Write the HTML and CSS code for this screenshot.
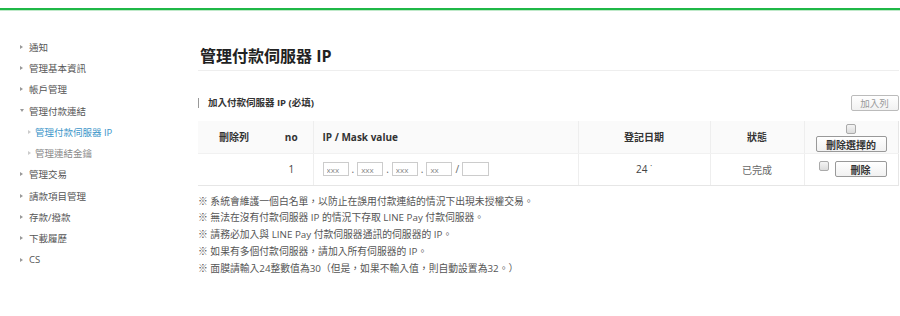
FILE: index.html
```html
<!DOCTYPE html>
<html lang="zh-Hant">

<head>
    <meta charset="UTF-8">
    <meta name="viewport" content="width=device-width, initial-scale=1.0">
    <title>管理付款伺服器 IP</title>
    <link rel="stylesheet" href="styles.css">
</head>

<body>
    <div class="topbar"></div>
    <div class="layout">
        <ul class="menu">
            <li><i class="arrow"></i>通知</li>
            <li><i class="arrow"></i>管理基本資訊</li>
            <li><i class="arrow"></i>帳戶管理</li>
            <li class="open"><i class="arrow"></i>管理付款連結</li>
            <li class="sub current"><i class="arrow"></i>管理付款伺服器 IP</li>
            <li class="sub"><i class="arrow"></i>管理連結金鑰</li>
            <li><i class="arrow"></i>管理交易</li>
            <li><i class="arrow"></i>請款項目管理</li>
            <li><i class="arrow"></i>存款/撥款</li>
            <li><i class="arrow"></i>下載履歷</li>
            <li><i class="arrow"></i>CS</li>
        </ul>

        <div class="main">
            <h1 class="title">管理付款伺服器 IP</h1>

            <div class="section-head">
                <h2>加入付款伺服器 IP (必填)</h2>
                <button class="btn btn-add">加入列</button>
            </div>

            <table class="ip-table">
                <colgroup>
                    <col style="width:72px">
                    <col style="width:43px">
                    <col style="width:265px">
                    <col style="width:132px">
                    <col style="width:94px">
                    <col style="width:94px">
                </colgroup>
                <thead>
                    <tr>
                        <th>刪除列</th>
                        <th class="no-line">no</th>
                        <th class="left">IP / Mask value</th>
                        <th>登記日期</th>
                        <th>狀態</th>
                        <th>
                            <div class="del-all">
                                <input type="checkbox" class="chk">
                                <button class="btn btn-del">刪除選擇的</button>
                            </div>
                        </th>
                    </tr>
                </thead>
                <tbody>
                    <tr>
                        <td></td>
                        <td class="no-line">1</td>
                        <td class="left">
                            <div class="ip">
                                <input type="text" class="oct" placeholder="xxx">
                                <span>.</span>
                                <input type="text" class="oct" placeholder="xxx">
                                <span>.</span>
                                <input type="text" class="oct" placeholder="xxx">
                                <span>.</span>
                                <input type="text" class="oct" placeholder="xx">
                                <span>/</span>
                                <input type="text" class="oct mask">
                            </div>
                        </td>
                        <td>24 ˙</td>
                        <td class="muted">已完成</td>
                        <td>
                            <div class="row-del">
                                <input type="checkbox" class="chk">
                                <button class="btn btn-del">刪除</button>
                            </div>
                        </td>
                    </tr>
                </tbody>
            </table>

            <ul class="notes">
                <li>※ 系統會維護一個白名單，以防止在誤用付款連結的情況下出現未授權交易。</li>
                <li>※ 無法在沒有付款伺服器 IP 的情況下存取 LINE Pay 付款伺服器。</li>
                <li>※ 請務必加入與 LINE Pay 付款伺服器通訊的伺服器的 IP。</li>
                <li>※ 如果有多個付款伺服器，請加入所有伺服器的 IP。</li>
                <li>※ 面膜請輸入24整數值為30（但是，如果不輸入值，則自動設置為32。）</li>
            </ul>
        </div>
    </div>
</body>

</html>
```

FILE: styles.css
```css
* {
    margin: 0;
    padding: 0;
    box-sizing: border-box;
}

ul {
    list-style: none;
}

body {
    background-color: #fff;
    color: #555;
    font-family: "Open Sans", "Noto Sans CJK TC", sans-serif;
    font-size: 10px;
}

.topbar {
    margin-top: 8px;
    height: 3px;
    border-top: 2px solid #1fb847;
    border-bottom: 1px solid #bfe9c9;
}

.layout {
    display: flex;
}

/* left menu */
.menu {
    width: 198px;
    padding: 25px 0 0 20px;
    flex-shrink: 0;
}

.menu li {
    display: flex;
    align-items: center;
    height: 21.3px;
    font-size: 9.5px;
    color: #555;
}

.menu .arrow {
    width: 0;
    height: 0;
    margin-right: 6px;
    border-left: 3px solid #999;
    border-top: 2.5px solid transparent;
    border-bottom: 2.5px solid transparent;
}

.menu li.open .arrow {
    margin-right: 5px;
    border-top: 3px solid #999;
    border-left: 2.5px solid transparent;
    border-right: 2.5px solid transparent;
    border-bottom: none;
}

.menu li.sub {
    padding-left: 8px;
    color: #888;
}

.menu li.sub .arrow {
    margin-right: 4px;
    border-left-color: #ccc;
}

.menu li.current {
    color: #3b95c9;
}

/* main */
.main {
    flex: 1;
    padding-right: 2px;
}

.title {
    margin-top: 35px;
    height: 25px;
    line-height: 20px;
    font-size: 16px;
    font-weight: bold;
    color: #222;
    padding-left: 2px;
    border-bottom: 1px solid #eee;
}

.section-head {
    display: flex;
    justify-content: space-between;
    align-items: center;
    margin-top: 24px;
    height: 16px;
}

.section-head h2 {
    font-size: 9.5px;
    font-weight: bold;
    color: #333;
    padding-left: 9px;
    border-left: 1px solid #999;
    line-height: 10px;
}

.btn {
    font-family: inherit;
    background: linear-gradient(#fff, #f1f1f1);
    border: 1px solid #999;
    border-radius: 2px;
    cursor: pointer;
}

.btn-add {
    width: 48px;
    height: 16px;
    font-size: 9.5px;
    color: #999;
    border-color: #bbb;
}

.btn-del {
    height: 16px;
    font-size: 10px;
    font-weight: bold;
    color: #333;
}

/* table */
.ip-table {
    width: 700px;
    margin-top: 10px;
    border-collapse: collapse;
    table-layout: fixed;
}

.ip-table th,
.ip-table td {
    height: 32px;
    text-align: center;
    border-left: 1px solid #eee;
    border-bottom: 1px solid #e6e6e6;
}

.ip-table th:first-child,
.ip-table td:first-child,
.ip-table .no-line {
    border-left: none;
}

.ip-table th:last-child,
.ip-table td:last-child {
    border-right: 1px solid #e6e6e6;
}

.ip-table th {
    background-color: #fafafa;
    font-size: 10px;
    font-weight: bold;
    color: #333;
    border-bottom-color: #f1f1f1;
}

.ip-table td {
    font-size: 10px;
    color: #444;
}

.ip-table .left {
    text-align: left;
    padding-left: 9px;
}

.ip-table td.muted {
    color: #666;
}

.del-all {
    display: flex;
    flex-direction: column;
    align-items: center;
    gap: 2px;
    padding-top: 2px;
}

.del-all .btn-del {
    width: 71px;
}

.chk {
    appearance: none;
    width: 10px;
    height: 10px;
    border: 1px solid #aaa;
    border-radius: 2px;
    background: linear-gradient(#f4f4f4, #dcdcdc);
}

.row-del {
    display: flex;
    align-items: center;
    justify-content: center;
    gap: 6px;
    padding-left: 3px;
}

.row-del .chk {
    margin-top: -6px;
}

.row-del .btn-del {
    width: 52px;
}

.ip {
    display: flex;
    align-items: center;
    gap: 3px;
    color: #666;
}

.oct {
    width: 26px;
    height: 14px;
    border: 1px solid #ccc;
    font-family: inherit;
    font-size: 8px;
    padding: 0 3px;
    outline: none;
}

.oct::placeholder {
    color: #888;
}

.oct.mask {
    width: 27px;
}

/* notes */
.notes {
    margin-top: 8px;
}

.notes li {
    line-height: 16.8px;
    font-size: 9.8px;
    color: #555;
}
```
